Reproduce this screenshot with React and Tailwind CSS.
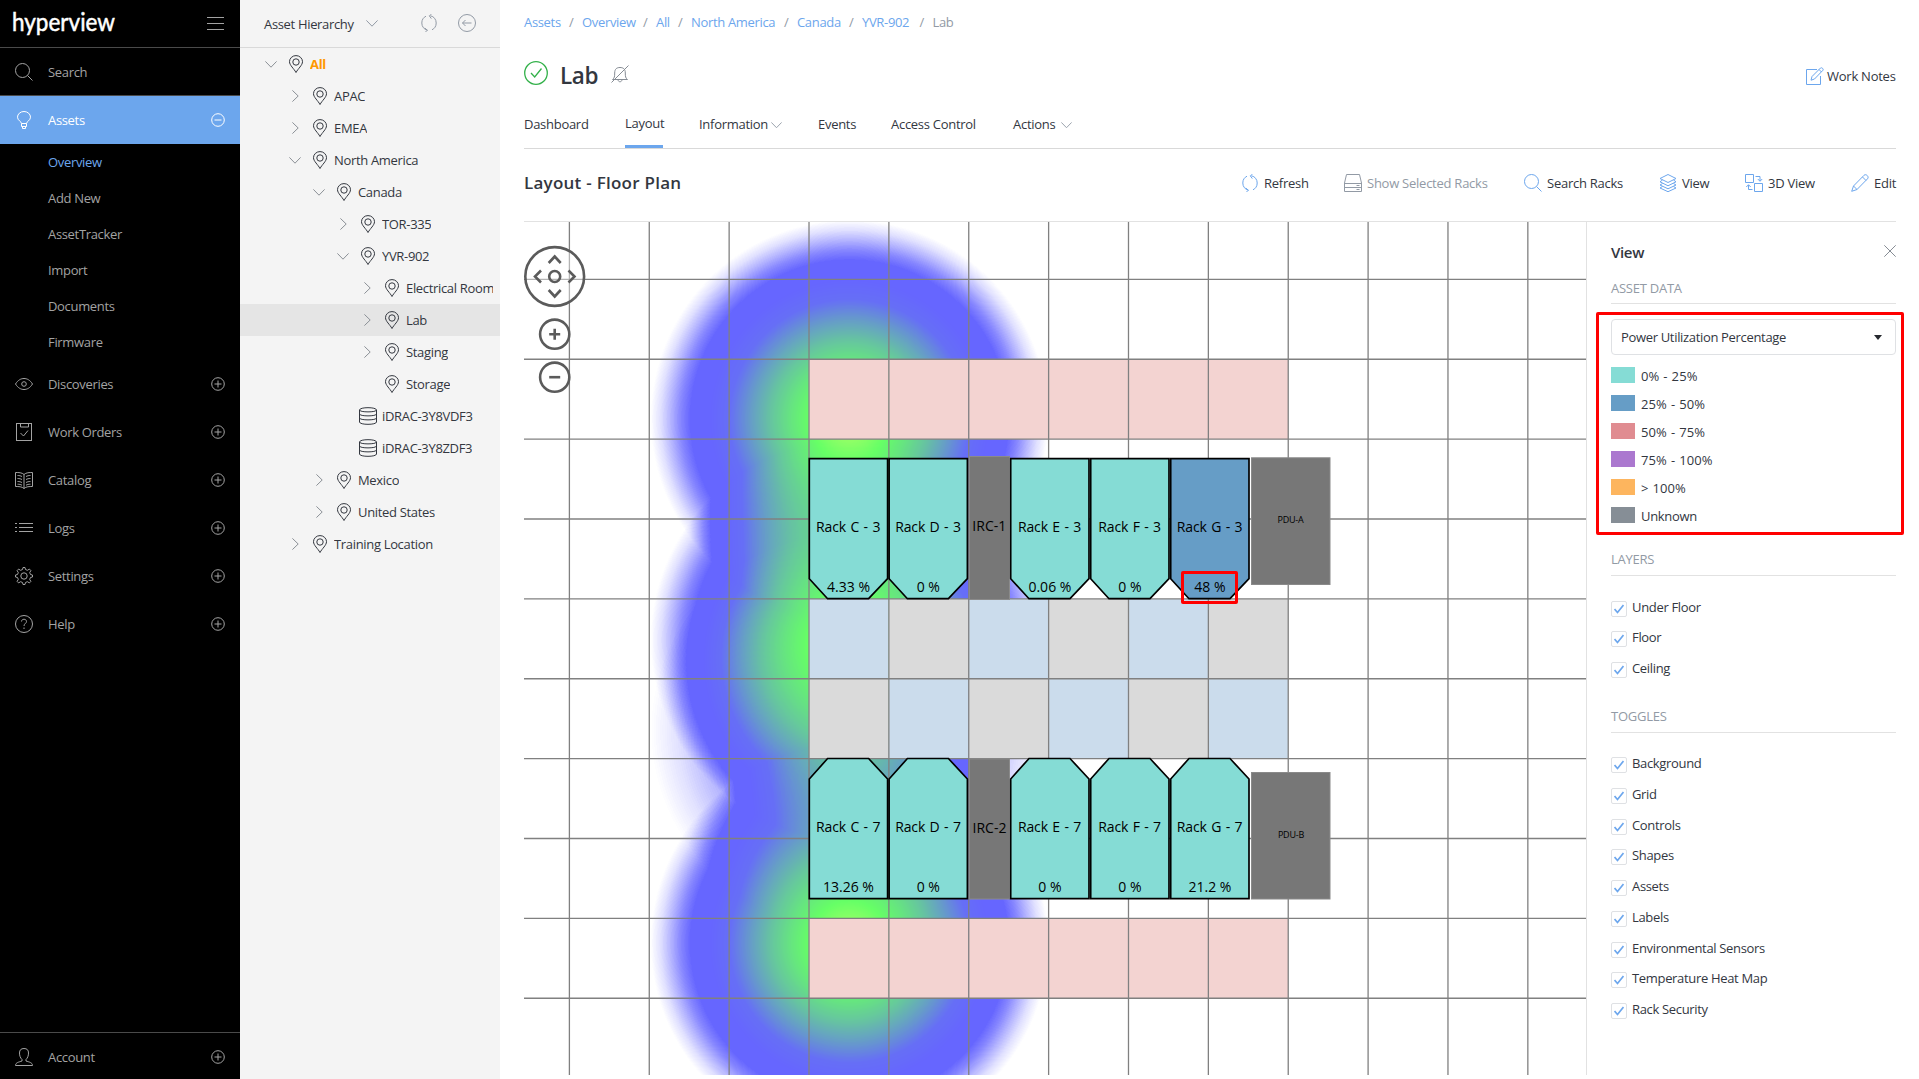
import React from 'react';

/* ---------- icons ---------- */

function Svg({ size = 18, box = 18, className = '', sw = 1, children }) {
  return (
    <svg
      width={size}
      height={size}
      viewBox={`0 0 ${box} ${box}`}
      fill="none"
      stroke="currentColor"
      strokeWidth={sw}
      className={`shrink-0 ${className}`}
    >
      {children}
    </svg>
  );
}

const SearchIcon = (p) => (
  <Svg {...p}>
    <circle cx="7.5" cy="7.5" r="7" />
    <path d="M12.5 12.5L17.5 17.5" />
  </Svg>
);
const BulbIcon = (p) => (
  <Svg {...p}>
    <path d="M6.5 12.5c0-2-4-3-4-6.300a6.500 5.700 0 0 1 13 0c0 3.300-4 4.300-4 6.300zM6.500 12.500v3h5v-3M7.500 15.500v2h3v-2" />
  </Svg>
);
const EyeIcon = (p) => (
  <Svg {...p}>
    <path d="M.5 9C3 5 6 3.500 9 3.500S15 5 17.500 9C15 13 12 14.500 9 14.500S3 13 .500 9z" />
    <circle cx="9" cy="9" r="2.300" />
  </Svg>
);
const TaskIcon = (p) => (
  <Svg {...p}>
    <rect x="1.5" y=".5" width="15" height="17" />
    <path d="M5.500.500v3.500h8v-3.500M5.500 10l3 3 4.500-5.500" />
  </Svg>
);
const BookIcon = (p) => (
  <Svg {...p}>
    <path d="M9 3.500C7 1.500 3.500 1.500.500 1.500v14c3 0 6.500 0 8.500 2 2-2 5.500-2 8.500-2v-14c-3 0-6.500 0-8.500 2zM9 3.500v14M2.500 4.500c2 0 3 .300 4.500 1M2.500 7.500c2 0 3 .300 4.500 1M2.500 10.500c2 0 3 .300 4.500 1M2.500 13.200c2 0 3 .300 4.500 1M15.500 4.500c-2 0-3 .300-4.500 1M15.500 7.500c-2 0-3 .300-4.500 1M15.500 10.500c-2 0-3 .300-4.500 1M15.500 13.200c-2 0-3 .300-4.500 1" />
  </Svg>
);
const ListIcon = (p) => (
  <Svg {...p}>
    <path d="M0 4.500h2M4 4.500h14M0 8.500h2M4 8.500h14M0 12.500h2M4 12.500h14" />
  </Svg>
);
const GearIcon = (p) => (
  <Svg {...p}>
    <circle cx="9" cy="9" r="3.200" />
    <path d="M7.500 2.500l.500-2h2l.500 2 1.900.800 2-1.200 1.500 1.500-1.200 2 .800 1.900 2 .500v2l-2 .500-.800 1.900 1.200 2-1.500 1.500-2-1.200-1.900.800-.500 2h-2l-.500-2-1.900-.800-2 1.200-1.500-1.500 1.200-2-.800-1.900-2-.500v-2l2-.500.800-1.900-1.200-2 1.500-1.500 2 1.200z" />
  </Svg>
);
const HelpIcon = (p) => (
  <Svg {...p}>
    <circle cx="9" cy="9" r="8.500" />
    <path d="M6.500 6.500c0-3 5-3 5 0 0 2-2.500 2-2.500 4.500M9 12.500v1.500" />
  </Svg>
);
const UserIcon = (p) => (
  <Svg {...p}>
    <path d="M9 .5c-3 0-4.500 1.500-4.500 4.500 0 2.500.800 5 2.500 6.500v1.500c-3 1-6.500 1.500-6.500 4.500h17c0-3-3.500-3.500-6.500-4.500v-1.500c1.700-1.500 2.500-4 2.500-6.500 0-3-1.500-4.500-4.500-4.500z" />
  </Svg>
);
const PlusCircle = (p) => (
  <Svg size={14} box={14} {...p}>
    <circle cx="7" cy="7" r="6.300" />
    <path d="M7 3.500v7M3.500 7h7" />
  </Svg>
);
const MinusCircle = (p) => (
  <Svg size={14} box={14} {...p}>
    <circle cx="7" cy="7" r="6.300" />
    <path d="M3.500 7h7" />
  </Svg>
);
const PinIcon = (p) => (
  <Svg {...p}>
    <path d="M9 17.500C7 13.700 2.500 10.200 2.500 6.700a6.500 6.100 0 0 1 13 0C15.500 10.200 11 13.700 9 17.500z" />
    <circle cx="9" cy="7" r="3.200" />
  </Svg>
);
const DbIcon = (p) => (
  <Svg {...p}>
    <path d="M.5 3C.5-.100 17.500-.100 17.500 3v12c0 3.100-17 3.100-17 0zM.500 3c0 2.500 17 2.500 17 0M.500 7c0 2.500 17 2.500 17 0M.500 11c0 2.500 17 2.500 17 0" />
  </Svg>
);
const ChevronDown = ({ w = 12, className = '' }) => (
  <svg width={w} height={w / 2 + 1} viewBox="0 0 12 7" fill="none" stroke="currentColor" className={`shrink-0 ${className}`}>
    <path d="M.4.400L6 6.200 11.600.400" />
  </svg>
);
const ChevronRight = () => (
  <svg width="7" height="12" viewBox="0 0 7 12" fill="none" stroke="currentColor" className="shrink-0">
    <path d="M.4.400L6.200 6 .400 11.600" />
  </svg>
);
const RefreshIcon = (p) => (
  <Svg {...p}>
    <path d="M7.500 16.200C4 15.500 1.800 12.500 1.800 9S3.500 3.500 6 2.200M10.500 1.800C14 2.500 16.200 5.500 16.200 9s-1.700 5.500-4.200 6.800M11.500.200L9.300 1.800l2 2.800M4.800 14l2.500 2.200L5.500 18" />
  </Svg>
);
const BackIcon = (p) => (
  <Svg {...p}>
    <circle cx="9" cy="9" r="8.500" />
    <path d="M13.500 9h-9M7.500 6l-3 3 3 3" />
  </Svg>
);
const BellOffIcon = (p) => (
  <Svg {...p}>
    <path d="M1.500 14.500h15c-2-1.500-2.200-3-2.200-6.500 0-4-2-5.500-5.300-5.500S3.700 4 3.700 8c0 3.500-.200 5-2.200 6.500zM7 14.500c0 3 4 3 4 0M.500 17.500L17.500.500" />
  </Svg>
);
const NoteIcon = (p) => (
  <Svg {...p}>
    <path d="M11 2.500H.500v15h14V9M6 9.500L14.500 1c1-1 3.500 1 2.500 2.200L8.500 12l-3.500 1.200zM13 2.500l2.500 2.500" />
  </Svg>
);
const RackIcon = (p) => (
  <Svg {...p}>
    <path d="M2.500.5h13l2 8.500v8.500H.500V9zM.500 9.500h17M.500 13.500h17M12.500 11.500h3M12.500 15.500h3" />
  </Svg>
);
const LayersIcon = (p) => (
  <Svg {...p}>
    <path d="M9 .5L17 4.500 9 8.500 1 4.500zM3.500 6L1 7.800l8 4 8-4L14.500 6M3.500 9.500L1 11l8 3.800L17 11l-2.500-1.500M3.500 12.500L1 14l8 3.700L17 14l-2.500-1.500" />
  </Svg>
);
const SwapIcon = (p) => (
  <Svg {...p}>
    <path d="M.5.500h8v8h-8zM9.500 9.500h8v8h-8zM10.500 2.500h4.500v4.500M12.800 5l2.200 2.300L17.200 5M7.500 15.500H3.500v-4.500M1.300 13l2.200-2.300L5.700 13" />
  </Svg>
);
const PencilIcon = (p) => (
  <Svg {...p}>
    <path d="M.7 17.300l1.800-5.300L13 1.300c2-2 5.500 1.500 3.500 3.500L6 15.500zM2.500 12L6 15.500M11.500 3l3.500 3.500" />
  </Svg>
);

/* ---------- left navigation ---------- */

const SUB = ['Overview', 'Add New', 'AssetTracker', 'Import', 'Documents', 'Firmware'];
const NAV = [
  ['Discoveries', EyeIcon],
  ['Work Orders', TaskIcon],
  ['Catalog', BookIcon],
  ['Logs', ListIcon],
  ['Settings', GearIcon],
  ['Help', HelpIcon],
];

function NavRow({ icon: Icon, label, end: End = PlusCircle, className = '' }) {
  return (
    <div className={`flex h-12 items-center pl-[15px] pr-[15px] ${className}`}>
      <Icon />
      <span className="ml-[15px]">{label}</span>
      {End && <End className="relative -top-[0.5px] ml-auto" />}
    </div>
  );
}

function Sidebar() {
  return (
    <nav className="flex w-60 shrink-0 flex-col bg-black text-[#a3a3a3]">
      <div className="flex h-12 items-center justify-between border-b border-[#4a4a4a] pl-3 pr-4">
        <svg width="104" height="46" viewBox="0 0 104 46" overflow="visible" className="shrink-0">
          <text
            x="0"
            y="29.500"
            textLength="103"
            lengthAdjust="spacingAndGlyphs"
            fill="#fff"
            stroke="#fff"
            strokeWidth=".5"
            className="font-['Lato',sans-serif] text-[25px] font-normal tracking-normal"
          >
            hyperview
          </text>
        </svg>
        <div className="flex flex-col gap-[5px]">
          <i className="h-px w-[17px] bg-[#a3a3a3]" />
          <i className="h-px w-[17px] bg-[#a3a3a3]" />
          <i className="h-px w-[17px] bg-[#a3a3a3]" />
        </div>
      </div>
      <NavRow icon={SearchIcon} label="Search" end={null} className="border-b border-[#4a4a4a]" />
      <NavRow icon={BulbIcon} label="Assets" end={MinusCircle} className="bg-[#6ca6ed] text-white" />
      {SUB.map((s, i) => (
        <div key={s} className={`flex h-9 items-center pl-12 ${i === 0 ? 'text-[#6ca6ed]' : ''}`}>
          {s}
        </div>
      ))}
      {NAV.map(([l, I]) => (
        <NavRow key={l} icon={I} label={l} />
      ))}
      <div className="mt-auto -mb-[2px] border-t border-[#4a4a4a]">
        <NavRow icon={UserIcon} label="Account" />
      </div>
    </nav>
  );
}

/* ---------- asset tree ---------- */

const TREE = [
  ['All', '', 'down', 'pin'],
  ['APAC', 'pl-6', 'right', 'pin'],
  ['EMEA', 'pl-6', 'right', 'pin'],
  ['North America', 'pl-6', 'down', 'pin'],
  ['Canada', 'pl-12', 'down', 'pin'],
  ['TOR-335', 'pl-[72px]', 'right', 'pin'],
  ['YVR-902', 'pl-[72px]', 'down', 'pin'],
  ['Electrical Room', 'pl-24', 'right', 'pin'],
  ['Lab', 'pl-24', 'right', 'pin'],
  ['Staging', 'pl-24', 'right', 'pin'],
  ['Storage', 'pl-24', '', 'pin'],
  ['iDRAC-3Y8VDF3', 'pl-[72px]', '', 'db'],
  ['iDRAC-3Y8ZDF3', 'pl-[72px]', '', 'db'],
  ['Mexico', 'pl-12', 'right', 'pin'],
  ['United States', 'pl-12', 'right', 'pin'],
  ['Training Location', 'pl-6', 'right', 'pin'],
];

function AssetTree() {
  return (
    <aside className="w-[260px] shrink-0 bg-[#f4f4f4] text-[#33373f]">
      <div className="flex h-12 items-center border-b border-[#d9d9d9] pl-6">
        <span className="w-[102px] whitespace-nowrap">Asset Hierarchy</span>
        <ChevronDown className="text-[#929aa5]" />
        <RefreshIcon className="relative -top-px ml-[42px] text-[#929aa5]" />
        <BackIcon className="relative -top-px ml-[20px] text-[#929aa5]" />
      </div>
      {TREE.map(([label, pad, arrow, icon], i) => (
        <div key={label} className={`h-8 pl-[22px] pr-[7px] ${label === 'Lab' ? 'bg-[#e5e5e5]' : ''}`}>
          <div className={`flex h-8 items-center ${pad}`}>
            <div className="flex w-[18px] shrink-0 justify-center text-[#8b9096]">
              {arrow === 'down' && <ChevronDown />}
              {arrow === 'right' && <ChevronRight />}
            </div>
            {icon === 'pin' ? <PinIcon className="ml-[6.500px]" /> : <DbIcon className="ml-[7px]" />}
            <span
              className={`overflow-hidden whitespace-nowrap ${icon === 'db' ? 'ml-[5px]' : 'ml-[5.500px]'} ${
                i === 0 ? 'font-bold text-[#ff9800]' : ''
              }`}
            >
              {label}
            </span>
          </div>
        </div>
      ))}
    </aside>
  );
}

/* ---------- main header ---------- */

const CRUMBS = [
  ['Assets', 'w-[36.500px]'],
  ['Overview', 'w-[52.500px]'],
  ['All', 'w-[13.500px]'],
  ['North America', 'w-[84.500px]'],
  ['Canada', 'w-[43.500px]'],
  ['YVR-902', 'w-[49px]'],
];

function Crumbs() {
  return (
    <div className="flex h-[45px] items-center pb-[2px] whitespace-nowrap text-[#6ca6ed]">
      {CRUMBS.map(([c, w]) => (
        <React.Fragment key={c}>
          <span className={w}>{c}</span>
          <span className="w-[21.500px] text-center text-[#929aa5]">/</span>
        </React.Fragment>
      ))}
      <span className="text-[#929aa5]">Lab</span>
    </div>
  );
}

function TitleRow() {
  return (
    <div className="flex h-[60px] items-center">
      <Svg size={24} box={24} sw={1.3} className="relative -top-[2px] text-[#33b14a]">
        <circle cx="12" cy="12" r="11.300" />
        <path d="M7 12l3.700 4L17.500 7.500" />
      </Svg>
      <h1 className="ml-[12px] w-[51px] pt-px text-[22.500px] font-semibold tracking-[-0.4px]">Lab</h1>
      <BellOffIcon className="relative -top-px text-[#868c94]" />
      <div className="ml-auto flex items-center pt-px">
        <NoteIcon className="mr-[3px] text-[#6ca6ed]" />
        <span className="w-[69px] whitespace-nowrap tracking-[-0.25px]">Work Notes</span>
      </div>
    </div>
  );
}

const TABS = [
  ['Dashboard', 'w-[65px]', false],
  ['Layout', 'w-[38px]', false],
  ['Information', 'w-[72px]', true],
  ['Events', 'w-[37px]', false],
  ['Access Control', 'w-[86px]', false],
  ['Actions', 'w-[48px]', true],
];

function Tabs() {
  return (
    <div className="flex h-11 gap-9 border-b border-[#d9d9d9] whitespace-nowrap">
      {TABS.map(([t, w, menu]) => (
        <div
          key={t}
          className={`flex items-center ${t === 'Layout' ? 'border-b-[3px] border-[#6ca6ed] pb-1' : 'pb-[5px]'}`}
        >
          <span className={`tracking-[-0.28px] ${w}`}>{t}</span>
          {menu && <ChevronDown w={11} className="relative top-px text-[#929aa5]" />}
        </div>
      ))}
    </div>
  );
}

const TOOLS = [
  ['Refresh', RefreshIcon, 'w-[44px]', 'text-[#6ca6ed]', ''],
  ['Show Selected Racks', RackIcon, 'w-[121px]', 'text-[#929aa5]', 'text-[#929aa5]'],
  ['Search Racks', SearchIcon, 'w-[76px]', 'text-[#6ca6ed]', ''],
  ['View', LayersIcon, 'w-[27px]', 'text-[#6ca6ed]', ''],
  ['3D View', SwapIcon, 'w-[47px]', 'text-[#6ca6ed]', ''],
  ['Edit', PencilIcon, 'w-[22px]', 'text-[#6ca6ed]', ''],
];

function Toolbar() {
  return (
    <div className="flex h-[73px] items-center border-b border-[#e2e2e2] pb-[4px]">
      <h2 className="pb-px text-[17px] font-semibold tracking-[0.25px]">Layout - Floor Plan</h2>
      <div className="ml-auto flex gap-9 whitespace-nowrap">
        {TOOLS.map(([t, I, w, ic, tc]) => (
          <div key={t} className={`flex items-center gap-[5px] ${tc}`}>
            <I className={ic} />
            <span className={`relative -top-[0.5px] tracking-[-0.25px] ${w}`}>{t}</span>
          </div>
        ))}
      </div>
    </div>
  );
}

/* ---------- floor plan ---------- */

const STEP = 79.87;
const COLS = Array.from({ length: 13 }, (_, i) => 569.4 + i * STEP);
const ROWS = Array.from({ length: 10 }, (_, i) => 279.4 + i * STEP);
const gx = (i) => 808.9 + i * STEP;

const PINK = '#f3d3d1';
const BLUE = '#cbdcec';
const GRAY = '#dadada';
const TILE_ROWS = [
  [1, [PINK, PINK, PINK, PINK, PINK, PINK]],
  [4, [BLUE, GRAY, BLUE, GRAY, BLUE, GRAY]],
  [5, [GRAY, BLUE, GRAY, BLUE, GRAY, BLUE]],
  [8, [PINK, PINK, PINK, PINK, PINK, PINK]],
];

const TEAL = '#85dcd5';
const RACKS = [
  [809.3, 'Rack C', '4.33 %', '13.26 %', TEAL],
  [889.1, 'Rack D', '0 %', '0 %', TEAL],
  [1010.7, 'Rack E', '0.06 %', '0 %', TEAL],
  [1090.7, 'Rack F', '0 %', '0 %', TEAL],
  [1170.7, 'Rack G', '48 %', '21.2 %', '#669dc6'],
];

const HEAT = [
  [419, 1],
  [640, 0.96],
  [730, 0.36],
  [943, 1],
];

function FloorPlan() {
  return (
    <svg width="1062" height="853" viewBox="524 222 1062 853" className="block shrink-0 font-['Open_Sans',sans-serif]">
      <defs>
        <radialGradient id="spot">
          <stop offset="0" stopColor="#000" stopOpacity="1" />
          <stop offset="1" stopColor="#000" stopOpacity="0" />
        </radialGradient>
        {/* turns summed intensity (alpha) into the blue-green-yellow palette */}
        <filter id="heat" filterUnits="userSpaceOnUse" x="524" y="200" width="1062" height="960" colorInterpolationFilters="sRGB">
          <feColorMatrix values="0 0 0 1 0  0 0 0 1 0  0 0 0 1 0  0 0 0 1 0" />
          <feComponentTransfer>
            <feFuncR type="table" tableValues="0 0 0 0 0 0 0 0 0 .3 .57" />
            <feFuncG type="table" tableValues="0 0 0 0 .06 .35 .61 .82 1 1 1" />
            <feFuncB type="table" tableValues="1 1 1 1 .94 .65 .39 .18 0 0 0" />
            <feFuncA type="table" tableValues="0 .12 .29 .47 .6 .6 .6 .6 .6 .6 .6 .6 .6 .6 .6 .6 .6 .6 .6 .6 .6" />
          </feComponentTransfer>
        </filter>
      </defs>

      <rect x="524" y="222" width="1062" height="853" fill="#fff" />
      <g filter="url(#heat)">
        {HEAT.map(([y, o]) => (
          <circle key={y} cx="849.500" cy={y} r="199" fill="url(#spot)" opacity={o} />
        ))}
      </g>

      {TILE_ROWS.map(([r, fills]) =>
        fills.map((f, i) => (
          <rect key={`${r}-${i}`} x={gx(i)} y={ROWS[0] + r * STEP} width={STEP} height={STEP} fill={f} />
        ))
      )}

      <g stroke="#808080" strokeWidth="1.300">
        {COLS.map((x) => (
          <line key={x} x1={x} x2={x} y1="222" y2="1075" />
        ))}
        {ROWS.map((y) => (
          <line key={y} x1="524" x2="1586" y1={y} y2={y} />
        ))}
      </g>

      <g fill="#777" stroke="#8a8a8a">
        <rect x="969.500" y="456.500" width="40" height="143" />
        <rect x="969.500" y="759" width="40" height="140" />
        <rect x="1251.500" y="457.800" width="78.500" height="126.700" />
        <rect x="1251.500" y="772.500" width="78.500" height="126.500" />
      </g>

      {RACKS.map(([x, name, top, bottom, fill]) => (
        <g key={name} stroke="#000" strokeWidth="1.700">
          <path d={`M${x} 458.700h78.300v120l-19 20h-41l-18.300-20z`} fill={fill} />
          <path d={`M${x} 898.700h78.300v-119.700l-19-20.500h-41l-18.300 20.500z`} fill={TEAL} />
          <g stroke="none" fill="#000" textAnchor="middle" className="text-[14px]">
            <text x={x + 38.9} y="532" className="tracking-[-0.15px] [word-spacing:1px]">{name} - 3</text>
            <text x={x + 39.2} y="592">{top}</text>
            <text x={x + 38.9} y="832.300" className="tracking-[-0.15px] [word-spacing:1px]">{name} - 7</text>
            <text x={x + 39.2} y="892.300">{bottom}</text>
          </g>
        </g>
      ))}

      <g fill="#000" textAnchor="middle" className="text-[14px]">
        <text x="989.300" y="531">IRC-1</text>
        <text x="989.500" y="833.300">IRC-2</text>
      </g>
      <g fill="#000" textAnchor="middle" className="text-[9px] tracking-[-0.2px]">
        <text x="1290.500" y="522.700">PDU-A</text>
        <text x="1291" y="837.700">PDU-B</text>
      </g>

      <g stroke="#5b5b5b" strokeWidth="2.600" fill="none">
        <circle cx="554.700" cy="276.500" r="29.400" fill="#fff" fillOpacity=".4" />
        <circle cx="554.700" cy="276.500" r="5.500" />
        <path d="M548.700 263l6-6.500 6 6.500M548.700 290l6 6.500 6-6.500M541 270.500l-6 6 6 6M568.500 270.500l6 6-6 6" />
        <circle cx="554.700" cy="334.200" r="14.600" fill="#fff" fillOpacity=".4" />
        <path d="M549.200 334.200h11M554.700 328.700v11" />
        <circle cx="554.700" cy="377.200" r="14.600" fill="#fff" fillOpacity=".4" />
        <path d="M549.200 377.200h11" />
      </g>
    </svg>
  );
}

/* ---------- view panel ---------- */

const LEGEND = [
  ['0% - 25%', 'bg-[#85dcd5]'],
  ['25% - 50%', 'bg-[#669dc6]'],
  ['50% - 75%', 'bg-[#e08c91]'],
  ['75% - 100%', 'bg-[#ab78cf]'],
  ['> 100%', 'bg-[#fdb55e]'],
  ['Unknown', 'bg-[#868e96]'],
];
const LAYERS = ['Under Floor', 'Floor', 'Ceiling'];
const TOGGLES = [
  'Background',
  'Grid',
  'Controls',
  'Shapes',
  'Assets',
  'Labels',
  'Environmental Sensors',
  'Temperature Heat Map',
  'Rack Security',
];

function Section({ title, className = '' }) {
  return (
    <div className={`flex h-[26px] items-start border-b border-[#e2e2e2] leading-[18px] tracking-[-0.25px] text-[#929aa5] ${className}`}>
      {title}
    </div>
  );
}

function Checks({ items, className = '' }) {
  return (
    <div className={className}>
      {items.map((t) => (
        <div key={t} className="flex h-[30.750px] items-start">
          <div className="flex h-4 w-4 items-center justify-center rounded-[2px] border border-[#dfe1e4]">
            <svg width="10" height="10" viewBox="0 0 10 10" fill="none" stroke="#6ca6ed" strokeWidth="1.700">
              <path d="M.5 5l3 3.500L9.500 1" />
            </svg>
          </div>
          <span className="-mt-px ml-[5px] leading-[14px]">{t}</span>
        </div>
      ))}
    </div>
  );
}

function ViewPanel() {
  return (
    <section className="relative h-[853px] w-[310px] shrink-0 border-l border-[#e2e2e2] pl-6 tracking-[-0.33px]">
      <div className="flex h-[52px] items-center justify-between pt-[8px]">
        <h3 className="text-[15px] font-semibold">View</h3>
        <Svg size={12} box={12} className="relative -top-px text-[#868c94]">
          <path d="M.3.300l11.400 11.400M11.700.300L.300 11.700" />
        </Svg>
      </div>
      <Section title="ASSET DATA" className="mt-1 pt-px" />
      <div className="mt-[15px] flex h-9 items-center justify-between rounded border border-[#dfe1e4] pl-[9px] pr-[13px]">
        <span className="whitespace-nowrap">Power Utilization Percentage</span>
        <i className="border-x-[4.500px] border-t-[5px] border-x-transparent border-t-[#26292e]" />
      </div>
      <div className="mt-3">
        {LEGEND.map(([t, c]) => (
          <div key={t} className="flex h-7 items-start">
            <i className={`h-4 w-6 ${c}`} />
            <span className={`ml-[6px] leading-[18px] ${t === 'Unknown' ? '' : 'tracking-[0.1px] [word-spacing:0.5px]'}`}>
              {t}
            </span>
          </div>
        ))}
      </div>
      <Section title="LAYERS" className="mt-[15px]" />
      <Checks items={LAYERS} className="mt-[24.600px]" />
      <Section title="TOGGLES" className="mt-[14.400px]" />
      <Checks items={TOGGLES} className="mt-[24px]" />
      <div className="absolute top-[90px] left-[9px] h-[223px] w-[308px] rounded-[2px] border-[3px] border-[#ff0000]" />
    </section>
  );
}

export default function App() {
  return (
    <div className="flex h-[1079px] w-[1919px] overflow-hidden bg-white font-['Open_Sans','Noto_Sans',sans-serif] text-[13px] leading-[18px] tracking-[-0.33px] text-[#33373f]">
      <Sidebar />
      <AssetTree />
      <main className="w-[1419px] pl-6 pr-[23px]">
        <Crumbs />
        <TitleRow />
        <Tabs />
        <Toolbar />
        <div className="relative flex tracking-normal">
          <FloorPlan />
          <div className="absolute top-[349px] left-[657px] h-[33px] w-[57px] rounded-[2px] border-[3px] border-[#ff0000]" />
          <ViewPanel />
        </div>
      </main>
    </div>
  );
}
